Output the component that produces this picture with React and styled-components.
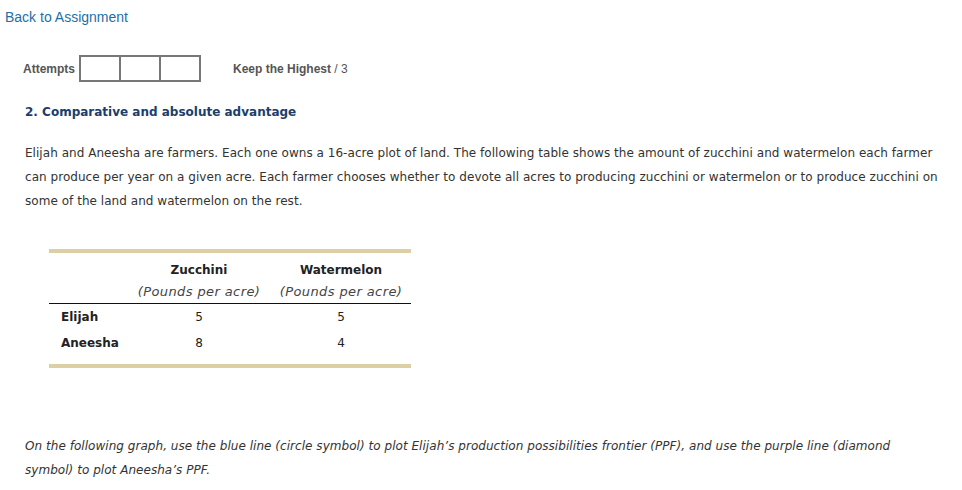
import React from "react";
import styled, { createGlobalStyle } from "styled-components";

const Global = createGlobalStyle`
  html, body { margin: 0; padding: 0; background: #fff; }
  body { font-family: "DejaVu Sans", Verdana, sans-serif; color: #333; }
`;

const Page = styled.div`
  width: 962px;
  height: 490px;
  overflow: hidden;
`;

const BackLink = styled.a`
  display: block;
  height: 34px;
  line-height: 34px;
  padding-left: 5px;
  font-family: "Liberation Sans", Arial, sans-serif;
  font-size: 14px;
  color: #1d6fa9;
  text-decoration: none;
`;

const AttemptsBar = styled.div`
  display: flex;
  align-items: center;
  height: 27px;
  margin-top: 21px;
  padding-left: 23px;
  font-family: "Liberation Sans", Arial, sans-serif;
  font-size: 12px;
  color: #555;
`;

const Label = styled.span`
  font-weight: bold;
  margin-right: 4px;
`;

const Boxes = styled.div`
  display: flex;
  height: 27px;
`;

const Box = styled.div`
  box-sizing: border-box;
  width: ${(p) => (p.$first ? 42 : 40)}px;
  height: 27px;
  border: 2px solid #777;
  border-left-width: ${(p) => (p.$first ? 2 : 0)}px;
`;

const Keep = styled.span`
  margin-left: 32px;
  b { font-weight: bold; }
`;

const Heading = styled.h2`
  margin: 20px 0 0 25px;
  font-size: 12px;
  line-height: 20px;
  font-weight: bold;
  color: #1b3e6c;
`;

const Para = styled.p`
  margin: ${(p) => p.$top}px 0 0 25px;
  width: ${(p) => p.$width}px;
  font-size: 12px;
  line-height: 24px;
  letter-spacing: 0.04px;
  font-style: ${(p) => (p.$italic ? "italic" : "normal")};
  color: #333;
`;

const Table = styled.div`
  margin: 36px 0 0 49px;
  width: 362px;
  border-top: 4px solid #dccfa4;
  border-bottom: 4px solid #dccfa4;
  font-size: 12px;
  color: #222;
`;

const Row = styled.div`
  display: grid;
  grid-template-columns: 78px 144px 140px;
  line-height: ${(p) => p.$lh}px;
`;

const Head = styled.div`
  padding-top: 6px;
  border-bottom: 1px solid #111;
`;

const Body = styled.div`
  padding-bottom: 8px;
`;

const Cell = styled.div`
  text-align: ${(p) => (p.$left ? "left" : "center")};
  padding-left: ${(p) => (p.$left ? 12 : 0)}px;
  font-weight: ${(p) => (p.$bold ? "bold" : "normal")};
  white-space: nowrap;
`;

const Unit = styled(Cell)`
  font-style: italic;
  font-size: 13px;
  letter-spacing: 0.4px;
  color: #444;
`;

export default function App() {
  return (
    <Page>
      <Global />
      <BackLink href="#">Back to Assignment</BackLink>
      <AttemptsBar>
        <Label>Attempts</Label>
        <Boxes>
          <Box $first />
          <Box />
          <Box />
        </Boxes>
        <Keep>
          <b>Keep the Highest</b> / 3
        </Keep>
      </AttemptsBar>
      <Heading>2. Comparative and absolute advantage</Heading>
      <Para $top={19} $width={915}>
        Elijah and Aneesha are farmers. Each one owns a 16-acre plot of land. The following table shows the amount of
        zucchini and watermelon each farmer can produce per year on a given acre. Each farmer chooses whether to devote
        all acres to producing zucchini or watermelon or to produce zucchini on some of the land and watermelon on the
        rest.
      </Para>
      <Table>
        <Head>
          <Row $lh={22}>
            <Cell />
            <Cell $bold>Zucchini</Cell>
            <Cell $bold>Watermelon</Cell>
          </Row>
          <Row $lh={22}>
            <Cell />
            <Unit>(Pounds per acre)</Unit>
            <Unit>(Pounds per acre)</Unit>
          </Row>
        </Head>
        <Body>
          <Row $lh={26}>
            <Cell $left $bold>Elijah</Cell>
            <Cell>5</Cell>
            <Cell>5</Cell>
          </Row>
          <Row $lh={26}>
            <Cell $left $bold>Aneesha</Cell>
            <Cell>8</Cell>
            <Cell>4</Cell>
          </Row>
        </Body>
      </Table>
      <Para $top={66} $width={900} $italic>
        On the following graph, use the blue line (circle symbol) to plot Elijah’s production possibilities frontier
        (PPF), and use the purple line (diamond symbol) to plot Aneesha’s PPF.
      </Para>
    </Page>
  );
}
